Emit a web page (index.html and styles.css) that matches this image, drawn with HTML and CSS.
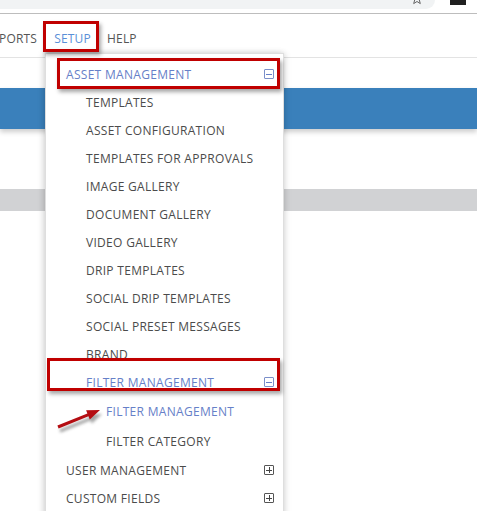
FILE: index.html
```html
<!DOCTYPE html>
<html>
<head>
<meta charset="utf-8">
<link rel="stylesheet" href="styles.css">
</head>
<body>
<div class="chrome">
  <div class="omnibox">
    <svg class="star" width="12" height="12" viewBox="0 0 12 12"><path d="M6 0.8 L7.5 4.3 L11.2 4.5 L8.3 6.9 L9.3 10.6 L6 8.5 L2.7 10.6 L3.7 6.9 L0.8 4.5 L4.5 4.3 Z" fill="none" stroke="#666" stroke-width="1"/></svg>
  </div>
  <div class="ext"></div>
</div>
<nav class="nav">
  <span class="nav-item">PORTS</span>
  <span class="nav-item active">SETUP</span>
  <span class="nav-item">HELP</span>
</nav>
<div class="page">
  <div class="band-blue"></div>
  <div class="band-gray"></div>
</div>

<div class="menu">
  <div class="row l1 active">ASSET MANAGEMENT <span class="tog minus"></span></div>
  <div class="row l2">TEMPLATES</div>
  <div class="row l2">ASSET CONFIGURATION</div>
  <div class="row l2">TEMPLATES FOR APPROVALS</div>
  <div class="row l2">IMAGE GALLERY</div>
  <div class="row l2">DOCUMENT GALLERY</div>
  <div class="row l2">VIDEO GALLERY</div>
  <div class="row l2">DRIP TEMPLATES</div>
  <div class="row l2">SOCIAL DRIP TEMPLATES</div>
  <div class="row l2">SOCIAL PRESET MESSAGES</div>
  <div class="row l2">BRAND</div>
  <div class="row l2 active">FILTER MANAGEMENT <span class="tog minus"></span></div>
  <div class="row l3 active">FILTER MANAGEMENT</div>
  <div class="row l3">FILTER CATEGORY</div>
  <div class="row l1">USER MANAGEMENT <span class="tog plus"></span></div>
  <div class="row l1">CUSTOM FIELDS <span class="tog plus"></span></div>
</div>

<div class="mark mark-setup"></div>
<div class="mark mark-asset"></div>
<div class="mark mark-filter"></div>
<svg class="arrow" width="60" height="36" viewBox="0 0 60 36">
  <defs>
    <filter id="sh" x="-20%" y="-50%" width="140%" height="200%">
      <feGaussianBlur stdDeviation="1.5"/>
    </filter>
  </defs>
  <g transform="translate(2,4)" fill="#666" opacity="0.6" filter="url(#sh)">
    <path d="M3.4 24.6 L33.4 12.5 L32.1 9.2 L46 9 L35.8 18.5 L34.5 15.3 L4.6 27.4 Z"/>
  </g>
  <path d="M3.4 24.6 L33.4 12.5 L32.1 9.2 L46 9 L35.8 18.5 L34.5 15.3 L4.6 27.4 Z" fill="#b40d12"/>
</svg>
</body>
</html>
```
FILE: styles.css
```css
* { box-sizing: border-box; }
html, body { margin: 0; padding: 0; background: #fff; }
body {
  width: 477px;
  height: 511px;
  overflow: hidden;
  position: relative;
  font-family: "Open Sans", "Liberation Sans", sans-serif;
}
.chrome {
  height: 14px;
  border-bottom: 1px solid #bdbdbd;
  position: relative;
  display: flex;
}
.omnibox {
  width: 435px;
  height: 9px;
  background: #f1f3f4;
  border-radius: 0 0 14px 0;
  position: relative;
}
.star {
  position: absolute;
  left: 411px;
  top: -7px;
}
.ext {
  margin-left: 15px;
  width: 16px;
  height: 5px;
  background: #202020;
}
.nav {
  height: 44px;
  border-bottom: 1px solid #e3e3e3;
  display: flex;
  padding-top: 17px;
  font-size: 12px;
  letter-spacing: 0.2px;
  line-height: 16px;
  color: #555;
}
.nav-item { margin-right: 16px; }
.nav-item:first-child { margin-left: -1px; margin-right: 17px; }
.nav-item.active { color: #5a8fd8; }
.page { padding-top: 30px; }
.band-blue {
  height: 41px;
  background: #3a80bb;
  box-shadow: 0 3px 5px rgba(0,0,0,0.2);
}
.band-gray {
  margin-top: 60px;
  height: 22px;
  background: #d1d2d4;
}
.menu {
  position: absolute;
  left: 45px;
  top: 53px;
  width: 239px;
  height: 480px;
  background: #fff;
  border: 1px solid #dedede;
  box-shadow: -2px 0 6px rgba(0,0,0,0.15), 2px 0 6px rgba(0,0,0,0.1);
  padding-top: 6px;
  font-size: 12px;
  letter-spacing: 0.3px;
  color: #4b4b4b;
}
.row {
  height: 28px;
  display: flex;
  align-items: center;
  padding-right: 9px;
  white-space: nowrap;
}
.row.l1 { padding-left: 20px; }
.row.l2 { padding-left: 40px; }
.row.l3 { padding-left: 60px; height: 30px; }
.row.active { color: #6680c8; }
.tog {
  margin-left: auto;
  width: 10px;
  height: 10px;
  border: 1px solid #555;
  border-radius: 1px;
  position: relative;
}
.row.active .tog { border-color: #7b8fc9; }
.tog::before {
  content: "";
  position: absolute;
  left: 1px;
  right: 1px;
  top: 3.5px;
  height: 1px;
  background: #444;
}
.tog.plus::after {
  content: "";
  position: absolute;
  top: 1px;
  bottom: 1px;
  left: 3.5px;
  width: 1px;
  background: #444;
}
.row.active .tog::before { background: #6680c8; }
.mark {
  position: absolute;
  border: 3px solid #c00000;
  box-shadow: 2px 3px 4px rgba(0,0,0,0.35);
}
.mark-setup { left: 43px; top: 21px; width: 56px; height: 31px; }
.mark-asset { left: 57px; top: 58px; width: 223px; height: 31px; }
.mark-filter { left: 47px; top: 358px; width: 233px; height: 33px; }
.arrow {
  position: absolute;
  left: 54px;
  top: 401px;
}
```
